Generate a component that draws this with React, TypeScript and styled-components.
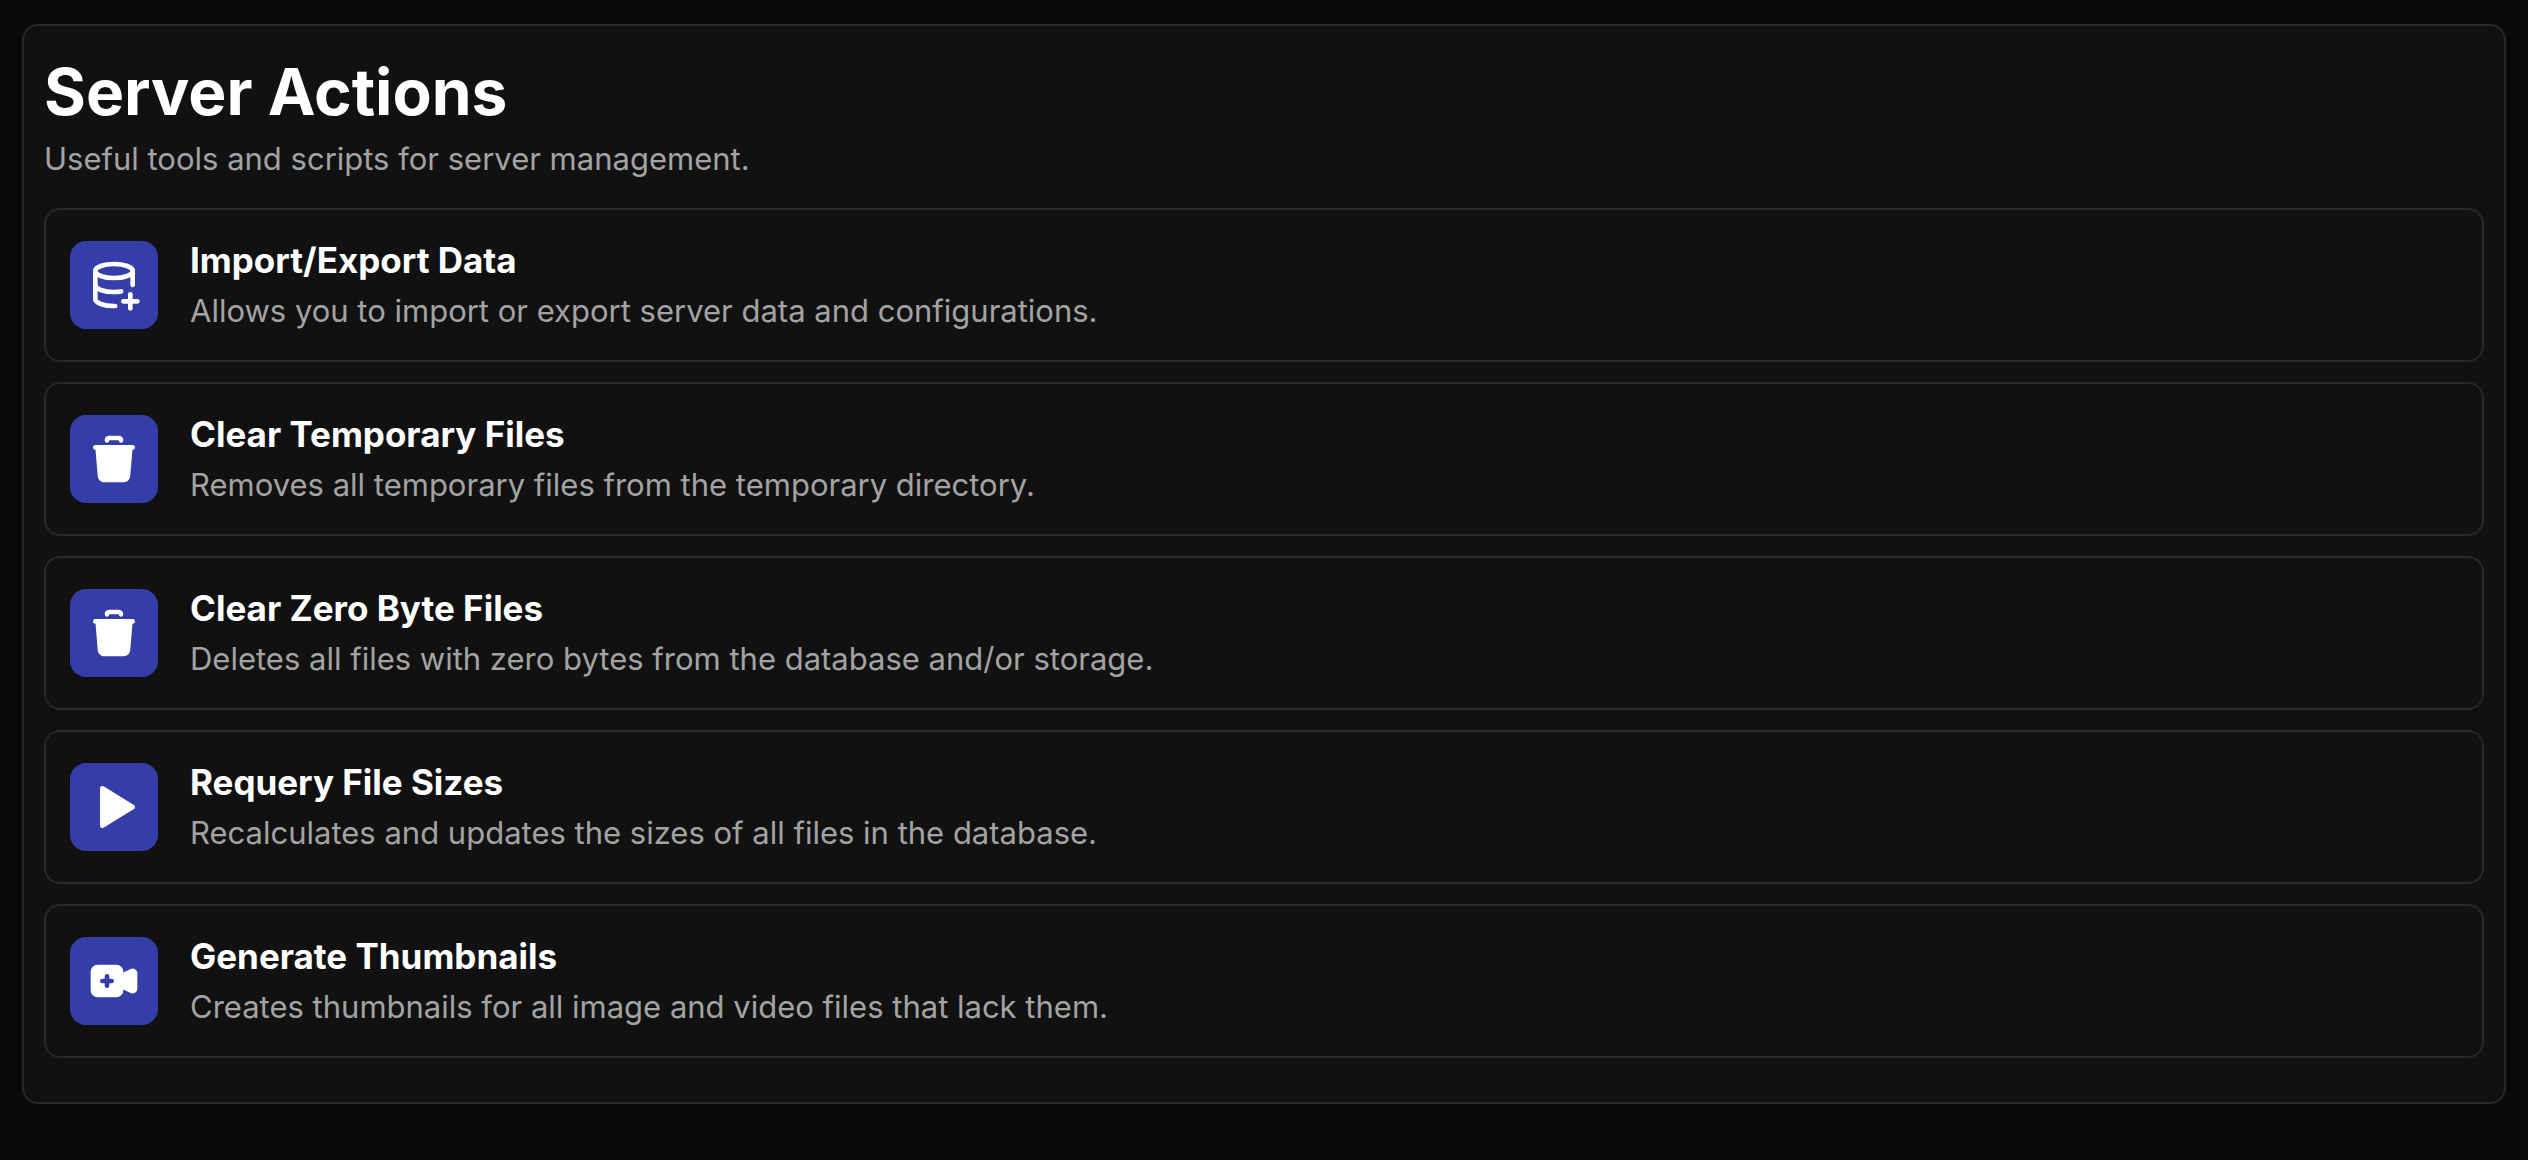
import React from "react";
import styled, { createGlobalStyle } from "styled-components";

const GlobalStyle = createGlobalStyle`
  *, *::before, *::after { box-sizing: border-box; }
  body {
    margin: 0;
    background: #0a0a0a;
    color: #ffffff;
    font-family: Inter, "Liberation Sans", sans-serif;
    font-size: 32px;
  }
`;

const Page = styled.main`
  padding: 24px 22px;
`;

const Panel = styled.section`
  padding: 24px 20px 44px;
  background: #111111;
  border: 2px solid #282828;
  border-radius: 16px;
`;

const Heading = styled.h1`
  margin: 0;
  font-size: 64px;
  line-height: 84px;
  font-weight: 700;
`;

const Dimmed = styled.p`
  margin: 0;
  color: #a3a3a3;
  font-size: 31px;
  line-height: 50px;
`;

const ActionList = styled.ul`
  display: flex;
  flex-direction: column;
  gap: 20px;
  margin: 24px 0 0;
  padding: 0;
  list-style: none;
`;

const ActionCard = styled.li`
  display: flex;
  align-items: center;
  gap: 32px;
  padding: 24px;
  border: 2px solid #282828;
  border-radius: 16px;
`;

const ActionButton = styled.button`
  display: flex;
  flex: none;
  align-items: center;
  justify-content: center;
  width: 88px;
  height: 88px;
  padding: 0;
  border: 0;
  border-radius: 16px;
  background: #343da8;
  color: #ffffff;
  cursor: pointer;

  svg {
    width: 56px;
    height: 56px;
  }
`;

const ActionTitle = styled.h2`
  margin: 0;
  font-size: 35px;
  line-height: 52px;
  font-weight: 700;
`;

const DatabasePlusIcon = () => (
  <svg viewBox="0 0 24 24" fill="none" stroke="currentColor" strokeWidth="2" strokeLinecap="round" strokeLinejoin="round" aria-hidden="true">
    <path d="M4 6c0 1.657 3.582 3 8 3s8 -1.343 8 -3s-3.582 -3 -8 -3s-8 1.343 -8 3" />
    <path d="M4 6v6c0 1.657 3.582 3 8 3c1.075 0 2.1 -.08 3.037 -.224" />
    <path d="M20 12v-6" />
    <path d="M4 12v6c0 1.657 3.582 3 8 3c.166 0 .331 -.002 .495 -.006" />
    <path d="M16 19h6" />
    <path d="M19 16v6" />
  </svg>
);

const TrashIcon = () => (
  <svg viewBox="0 0 24 24" fill="currentColor" aria-hidden="true">
    <path d="M20 6a1 1 0 0 1 .117 1.993l-.117 .007h-.081l-.919 11a3 3 0 0 1 -2.824 2.995l-.176 .005h-8c-1.598 0 -2.904 -1.249 -2.992 -2.75l-.005 -.167l-.923 -11.083h-.08a1 1 0 0 1 -.117 -1.993l.117 -.007h16z" />
    <path d="M14 2a2 2 0 0 1 2 2a1 1 0 0 1 -1.993 .117l-.007 -.117h-4l-.007 .117a1 1 0 0 1 -1.993 -.117a2 2 0 0 1 1.85 -1.995l.15 -.005h4z" />
  </svg>
);

const PlayIcon = () => (
  <svg viewBox="0 0 24 24" fill="currentColor" aria-hidden="true">
    <path d="M6 4v16a1 1 0 0 0 1.524 .852l13 -8a1 1 0 0 0 0 -1.704l-13 -8a1 1 0 0 0 -1.524 .852z" />
  </svg>
);

const VideoPlusIcon = () => (
  <svg viewBox="0 0 24 24" fill="currentColor" fillRule="evenodd" aria-hidden="true">
    <path d="M13 5a3 3 0 0 1 3 3v.381l3.106 -1.552a2 2 0 0 1 2.894 1.789v6.765a2 2 0 0 1 -2.894 1.789l-3.106 -1.553v.381a3 3 0 0 1 -3 3h-8a3 3 0 0 1 -3 -3v-8a3 3 0 0 1 3 -3zM9 9a1 1 0 0 0 -1 1v1h-1a1 1 0 0 0 0 2h1v1a1 1 0 0 0 2 0v-1h1a1 1 0 0 0 0 -2h-1v-1a1 1 0 0 0 -1 -1z" />
  </svg>
);

const actions = [
  {
    title: "Import/Export Data",
    description: "Allows you to import or export server data and configurations.",
    Icon: DatabasePlusIcon,
  },
  {
    title: "Clear Temporary Files",
    description: "Removes all temporary files from the temporary directory.",
    Icon: TrashIcon,
  },
  {
    title: "Clear Zero Byte Files",
    description: "Deletes all files with zero bytes from the database and/or storage.",
    Icon: TrashIcon,
  },
  {
    title: "Requery File Sizes",
    description: "Recalculates and updates the sizes of all files in the database.",
    Icon: PlayIcon,
  },
  {
    title: "Generate Thumbnails",
    description: "Creates thumbnails for all image and video files that lack them.",
    Icon: VideoPlusIcon,
  },
];

export default function App() {
  return (
    <Page>
      <GlobalStyle />
      <Panel>
        <Heading>Server Actions</Heading>
        <Dimmed>Useful tools and scripts for server management.</Dimmed>
        <ActionList>
          {actions.map(({ title, description, Icon }) => (
            <ActionCard key={title}>
              <ActionButton type="button" aria-label={title}>
                <Icon />
              </ActionButton>
              <div>
                <ActionTitle>{title}</ActionTitle>
                <Dimmed>{description}</Dimmed>
              </div>
            </ActionCard>
          ))}
        </ActionList>
      </Panel>
    </Page>
  );
}
